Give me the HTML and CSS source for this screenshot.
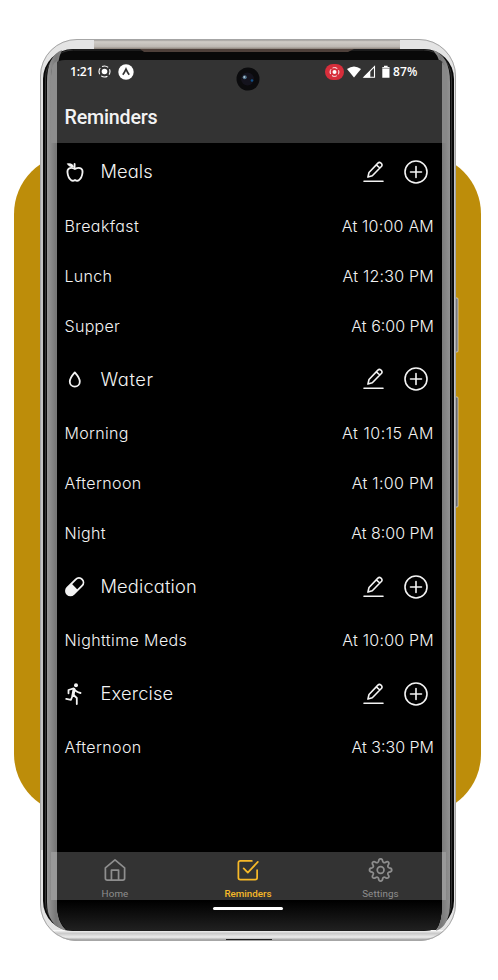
FILE: index.html
```
<!DOCTYPE html>
<html lang="en">
<head>
<meta charset="utf-8">
<title>Reminders</title>
<link rel="stylesheet" href="styles.css">
</head>
<body>
<svg class="defs" width="0" height="0">
  <symbol id="edit" viewBox="0 0 22 22"><path d="M1 20.2H20M4.9 16.1 6 11.5 14.9 2.1Q16.3.7 18 2.1T18.6 5.2L9.3 14.7ZM13.3 3.8 16.9 7" /></symbol>
  <symbol id="plus" viewBox="0 0 24 24"><circle cx="12" cy="12" r="11"/><path d="M6.5 12h11M12 6.5v11"/></symbol>
</svg>
<div class="stage">
  <svg class="frame" width="498" height="980" viewBox="0 0 498 980">
    <defs>
      <linearGradient id="rail" x2="0" y2="1"><stop offset="0" stop-color="#898684"/><stop offset=".25" stop-color="#d0ccc6"/><stop offset=".7" stop-color="#bdb8b2"/><stop offset="1" stop-color="#75695f"/></linearGradient>
      <linearGradient id="glass"><stop offset="0" stop-color="#999"/><stop offset=".45" stop-color="#777"/><stop offset="1" stop-color="#929292"/></linearGradient>
      <linearGradient id="chin" x2="0" y2="1"><stop offset="0" stop-color="#000"/><stop offset="1" stop-color="#202020"/></linearGradient>
      <linearGradient id="lip" x2="0" y2="1"><stop offset="0" stop-color="#fff"/><stop offset=".3" stop-color="#c9c9c9"/><stop offset=".65" stop-color="#ececec"/><stop offset="1" stop-color="#858585"/></linearGradient>
      <clipPath id="shell"><rect x="40" y="39" width="416" height="902" rx="37"/></clipPath>
    </defs>
    <rect x="14" y="154" width="467" height="660" rx="60" fill="#bd8d0a"/>
    <rect x="455" y="298" width="3" height="54" rx="1" fill="#777" stroke="#ddd" stroke-width=".7"/>
    <rect x="455" y="397" width="3" height="110" rx="1" fill="#666" stroke="#ddd" stroke-width=".7"/>
    <g clip-path="url(#shell)">
      <rect x="40" y="39" width="416" height="902" fill="#e4e4e4"/>
      <path d="M40 130H43V850H40ZM453 130H456V850H453Z" fill="#c4c4c4"/>
      <rect x="94" y="39" width="306" height="11" fill="url(#rail)"/>
      <rect x="40" y="930" width="416" height="11" fill="url(#lip)"/>
      <path d="M226 939H272V942H226Z" fill="#222"/>
    </g>
    <rect x="40.5" y="39.5" width="415" height="901" rx="36.5" fill="none" stroke="#a6a6a6"/>
    <rect x="43" y="49" width="411" height="882" rx="30" fill="#090909"/>
    <rect x="45.5" y="50" width="406" height="880" rx="28" fill="none" stroke="#333"/>
    <path d="M140 49H354L348 52H144Z" fill="#4e403a"/>
    <path d="M62 50Q47 56 47 82V902Q47 926 67 931Q57 923 57 904V79Q57 60 62 50Z" fill="url(#glass)"/>
    <path d="M433 50Q450 56 450 82V902Q450 926 436 931Q442 920 442 904V79Q442 60 433 50Z" fill="url(#glass)"/>
    <path d="M57 82H442V904Q442 921 436 930H67Q57 922 57 904Z" fill="#000"/>
    <path d="M57 901H442V904Q442 921 436 930H67Q57 922 57 904Z" fill="url(#chin)"/>
    <path d="M51 143V76Q51 60 65 60H440Q445 62 445 76V143Z" fill="#333"/>
    <path d="M51 143V76Q51 63 57 61V143Z" fill="#8d8d8d"/>
    <path d="M442 143V62Q447 67 447 80V143Z" fill="#888"/>
    <path d="M51 852H445V900H51Z" fill="#333"/>
    <path d="M51 852H57V900H51ZM442 852H446V900H442Z" fill="#999"/>
    <circle cx="248" cy="79" r="11.5" fill="#0b0b0d"/>
    <circle cx="247.5" cy="79" r="6.5" fill="#14131d"/>
    <circle cx="244.7" cy="77.2" r="2" fill="#50738c"/><circle cx="244.3" cy="77" r=".8" fill="#e8eeee"/>
    <circle cx="252" cy="80.5" r="1.3" fill="#12528a"/>
  </svg>
  <main class="screen">
    <header class="top">
      <div class="status">
        <span class="clock">1:21</span>
        <svg class="cast" width="13" height="13" viewBox="0 0 13 13"><circle cx="6.5" cy="6.5" r="2.8" fill="#fff"/><circle cx="6.5" cy="6.5" r="5.5" fill="none" stroke="#fff" stroke-width="1.1" stroke-dasharray="6.5 2.14" stroke-dashoffset="3.25"/></svg>
        <svg class="expo" width="16" height="16" viewBox="0 0 16 16"><circle cx="8" cy="8" r="7.7" fill="#fff"/><path d="M4.8 10.8Q6.4 8.8 8 5.2Q9.6 8.8 11.2 10.8" fill="none" stroke="#333" stroke-width="1.7"/></svg>
        <svg class="signals" width="66" height="16" viewBox="0 0 66 16">
          <rect width="19" height="16" rx="8" fill="#d72e3b"/><circle cx="9.5" cy="8" r="2" fill="#fff"/><circle cx="9.5" cy="8" r="4.4" fill="none" stroke="#fff" stroke-width="1" stroke-dasharray="5 1.91" stroke-dashoffset="2.5"/>
          <path d="M22 5Q29 -.2 36 5L29 13.6Z" fill="#fff"/>
          <path d="M39 13.2 49.5 2.6V13.2Z" fill="none" stroke="#fff" stroke-width="1.1"/><path d="M38.5 13.5 45.3 6.5V13.5Z" fill="#fff"/>
          <path d="M57.3 3H59V1.7H62.6V3H64.5V13.8H57.3Z" fill="#fff"/><path d="M57 4.3H65" stroke="#777" stroke-width=".8"/>
        </svg>
        <span class="battery">87%</span>
      </div>
      <h1>Reminders</h1>
    </header>
    <div class="list">
      <section>
        <div class="head"><svg class="ic" viewBox="0 0 20 20"><path d="M10 6.9C4.5 4.2 2 7.3 2.5 10.7Q3 15.9 6.3 18.4Q8.1 19.3 10 18Q11.9 19.3 13.7 18.4Q17 15.9 17.5 10.7C18 7.3 15.5 4.2 10 6.9Z"/><path d="M9.6 6.5V2"/><path class="fill" d="M1.7 1.5Q8 .4 9 5.1Q3.6 5.4 1.7 1.5Z"/></svg><h2>Meals</h2><svg class="edit"><use href="#edit"/></svg><svg class="plus"><use href="#plus"/></svg></div>
        <div class="row"><span class="wide">Breakfast</span><span class="time long">At 10:00 AM</span></div>
        <div class="row"><span>Lunch</span><span class="time long">At 12:30 PM</span></div>
        <div class="row"><span>Supper</span><span class="time">At 6:00 PM</span></div>
      </section>
      <section>
        <div class="head"><svg class="ic" viewBox="0 0 20 20"><path d="M9.8 3.4Q4.8 9 4.8 12.7A5 4.9 0 0 0 14.8 12.7Q14.8 9 9.8 3.4Z"/></svg><h2 class="water">Water</h2><svg class="edit"><use href="#edit"/></svg><svg class="plus"><use href="#plus"/></svg></div>
        <div class="row"><span>Morning</span><span class="time fifteen">At 10:15 AM</span></div>
        <div class="row"><span class="wide">Afternoon</span><span class="time one">At 1:00 PM</span></div>
        <div class="row"><span>Night</span><span class="time">At 8:00 PM</span></div>
      </section>
      <section>
        <div class="head"><svg class="ic" viewBox="0 0 20 20"><g transform="rotate(45 9.7 9.7)"><rect x="5.2" y="-.8" width="9" height="21" rx="4.5"/><path class="fill" d="M5.2 9.7H14.2V15.7A4.5 4.5 0 0 1 5.2 15.7Z"/></g></svg><h2 class="med">Medication</h2><svg class="edit"><use href="#edit"/></svg><svg class="plus"><use href="#plus"/></svg></div>
        <div class="row"><span class="wide">Nighttime Meds</span><span class="time long">At 10:00 PM</span></div>
      </section>
      <section>
        <div class="head"><svg class="ic run" viewBox="0 0 20 20"><circle class="fill" cx="11" cy="1.3" r="2"/><path d="M3.5 9.3V6L8.7 4.4Q10.4 7.8 15.5 9M1.2 14.9 6 15.8 8 10.5 11.8 14V20"/><path class="body" d="M9 5.5 8 11.2"/></svg><h2 class="med">Exercise</h2><svg class="edit"><use href="#edit"/></svg><svg class="plus"><use href="#plus"/></svg></div>
        <div class="row"><span class="wide">Afternoon</span><span class="time">At 3:30 PM</span></div>
      </section>
    </div>
    <nav>
      <a><svg width="24" height="26" viewBox="0 0 24 26"><path d="M2 10.2 12 2 22 10.2V21Q22 23 20 23H4Q2 23 2 21ZM8.3 23V12.5H15.7V23"/></svg>Home</a>
      <a class="on"><svg width="24" height="26" viewBox="0 0 24 26"><path d="M16 3H4Q2 3 2 5V20.5Q2 22.5 4 22.5H19.5Q21.5 22.5 21.5 20.5V12.5M7.5 10.8 11.8 15.2 22.2 4.1"/></svg>Reminders</a>
      <a><svg width="26" height="26" viewBox="0 0 26 26"><circle cx="12.6" cy="12.4" r="3.5"/><path d="M10.8 4.2Q11 1.4 13 1.4T15.2 4.2Q16 6.1 17.9 5.2Q20 3.7 21.1 4.9T20.8 8.1Q19.9 10 21.8 10.8Q24.6 11 24.6 13T21.8 15.2Q19.9 16 20.8 17.9Q22.3 20 21.1 21.1T17.9 20.8Q16 19.9 15.2 21.8Q15 24.6 13 24.6T10.8 21.8Q10 19.9 8.1 20.8Q6 22.3 4.9 21.1T5.2 17.9Q6.1 16 4.2 15.2Q1.4 15 1.4 13T4.2 10.8Q6.1 10 5.2 8.1Q3.7 6 4.9 4.9T8.1 5.2Q10 6.1 10.8 4.2Z" transform="translate(-.4 -.6)"/></svg>Settings</a>
    </nav>
    <div class="pill"></div>
  </main>
</div>
</body>
</html>
```
FILE: styles.css
```
* { box-sizing: border-box; }
body { margin: 0; background: #fff; overflow: hidden; }
.defs, .frame { position: absolute; }
.frame { inset: 0; }
.stage { position: relative; width: 498px; height: 980px; padding: 60px 53px 0 51px; }
.screen { position: relative; display: flex; flex-direction: column; height: 871px; color: #f3f3f3; font-family: Inter, sans-serif; }
.top { height: 83.3px; padding-top: 3px; flex: none; }
.status { display: flex; align-items: center; height: 17px; padding: 0 26px 0 19px; font: 600 12.2px "Open Sans", sans-serif; color: #fff; }
.clock { width: 29px; letter-spacing: -.3px; }
.cast { margin-left: -1px; }
.expo { margin-left: 7px; }
.signals { margin-left: auto; margin-right: 2px; }
.battery { width: 26px; font-size: 12px; letter-spacing: .2px; white-space: nowrap; }
h1 { margin: 25px 0 0 13.5px; font: 500 19.7px/26px Roboto, sans-serif; letter-spacing: -.2px; }
h2, .row { font-weight: 300; font-feature-settings: "cv11"; }
.list { flex: none; height: 708.7px; padding: 0 11px 0 13.5px; }
.head { display: flex; align-items: center; height: 57.3px; padding-right: 6px; }
h2 { margin: -1px auto 0 16px; font-size: 18.3px; letter-spacing: .1px; }
h2.water { letter-spacing: .6px; }
h2.med { letter-spacing: .15px; }
.row { display: flex; align-items: center; justify-content: space-between; height: 50px; font-size: 16px; letter-spacing: .3px; }
.wide { letter-spacing: .4px; }
.time { letter-spacing: 0; }
.time.long { letter-spacing: .22px; }
.time.fifteen { letter-spacing: .55px; }
.time.one { letter-spacing: .3px; }
.ic { width: 20px; height: 20px; overflow: visible; }
.ic, .edit, .plus, nav svg { fill: none; stroke: currentColor; stroke-width: 1.8; stroke-linecap: round; stroke-linejoin: round; }
.ic .fill { fill: currentColor; stroke: none; }
.run .body { stroke-width: 3; }
.edit { width: 22px; height: 22px; margin-right: 19px; stroke-width: 1.6; }
.plus { width: 24px; height: 24px; stroke-width: 1.6; }
nav { display: flex; flex: none; height: 48px; color: #8e8e8e; font: 9.8px/12px Roboto, sans-serif; }
nav a { flex: none; display: flex; flex-direction: column; align-items: center; padding-top: 6px; gap: 5px; letter-spacing: .1px; }
nav a:first-child { width: 128px; }
nav a:nth-child(2) { width: 138px; }
nav a:nth-child(3) { width: 127px; }
nav .on { color: #f7b928; font-weight: 500; letter-spacing: 0; }
.pill { width: 70px; height: 2.5px; margin: 7.3px 0 0 162px; border-radius: 2px; background: #fff; }
```
